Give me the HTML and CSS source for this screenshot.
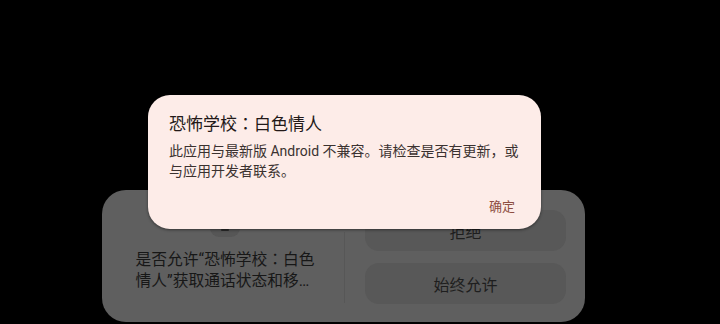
FILE: index.html
```html
<!DOCTYPE html>
<html lang="zh-CN">
<head>
  <meta charset="UTF-8">
  <meta name="viewport" content="width=device-width, initial-scale=1.0">
  <title>恐怖学校：白色情人</title>
  <link rel="stylesheet" href="styles.css">
</head>
<body>
  <div class="screen">
    <!-- 权限请求面板（被对话框遮住一部分） -->
    <div class="sheet">
      <div class="sheet-info">
        <div class="perm-icon"><span class="perm-mark"></span></div>
        <p class="perm-text">是否允许“恐怖学校<span class="colon" lang="zh-TW">：</span>白色<br>情人”获取通话状态和移…</p>
      </div>
      <div class="sheet-divider"></div>
      <div class="sheet-actions">
        <div class="sheet-btn">拒绝</div>
        <div class="sheet-btn">始终允许</div>
      </div>
    </div>

    <!-- 不兼容提示 -->
    <div class="dialog">
      <h1 class="dialog-title">恐怖学校<span class="colon" lang="zh-TW">：</span>白色情人</h1>
      <p class="dialog-body">此应用与最新版 Android 不兼容。请检查是否有更新，或<br>与应用开发者联系。</p>
      <div class="dialog-footer">
        <span class="dialog-btn">确定</span>
      </div>
    </div>
  </div>
</body>
</html>
```

FILE: styles.css
```css
* {
  box-sizing: border-box;
}

body {
  margin: 0;
  background: #000;
  font-family: "Roboto", "Noto Sans CJK SC", sans-serif;
}

/* 全角冒号居中显示 */
.colon {
  font-family: "Noto Sans CJK TC", "Noto Sans CJK JP", sans-serif;
}

.screen {
  position: relative;
  width: 720px;
  height: 324px;
  overflow: hidden;
  padding-top: 190px;
  padding-left: 102px;
}

.sheet {
  width: 483px;
  height: 132px;
  background: #5f5f5f;
  border-radius: 24px;
  display: flex;
}

.sheet-info {
  width: 242px;
  display: flex;
  flex-direction: column;
  align-items: center;
  padding-top: 15px;
  padding-left: 4px;
}

.perm-icon {
  width: 30px;
  height: 32px;
  border-radius: 9px;
  background: #565656;
  position: relative;
}

.perm-mark {
  position: absolute;
  left: 11px;
  bottom: 6px;
  width: 8px;
  height: 2px;
  border-radius: 1px;
  background: #2a2a2a;
}

.perm-text {
  margin: 11px 0 0;
  font-size: 15.75px;
  line-height: 21px;
  color: #171717;
  white-space: nowrap;
}

.sheet-divider {
  width: 1px;
  margin: 42px 0 19px;
  background: #575757;
}

.sheet-actions {
  flex: 1;
  display: flex;
  flex-direction: column;
  gap: 12px;
  padding: 20px 19px 0 20px;
}

.sheet-btn {
  height: 41px;
  border-radius: 14px;
  background: #585858;
  color: #1e1e1e;
  font-size: 16px;
  display: flex;
  align-items: center;
  justify-content: center;
}

.dialog {
  position: absolute;
  left: 148px;
  top: 95px;
  width: 393px;
  height: 134px;
  background: #fdece8;
  border-radius: 22px;
  box-shadow: 0 1px 3px rgba(0, 0, 0, 0.45);
  padding: 16px 21px 0 21px;
}

.dialog-title {
  margin: 0;
  font-size: 17px;
  font-weight: 400;
  line-height: 24px;
  color: #231918;
}

.dialog-body {
  margin: 5px 0 0;
  font-size: 14px;
  line-height: 20px;
  color: #3b3230;
  white-space: nowrap;
}

.dialog-footer {
  display: flex;
  justify-content: flex-end;
  padding-top: 16px;
  padding-right: 5px;
}

.dialog-btn {
  font-size: 13px;
  line-height: 20px;
  color: #8d4e42;
}
```
